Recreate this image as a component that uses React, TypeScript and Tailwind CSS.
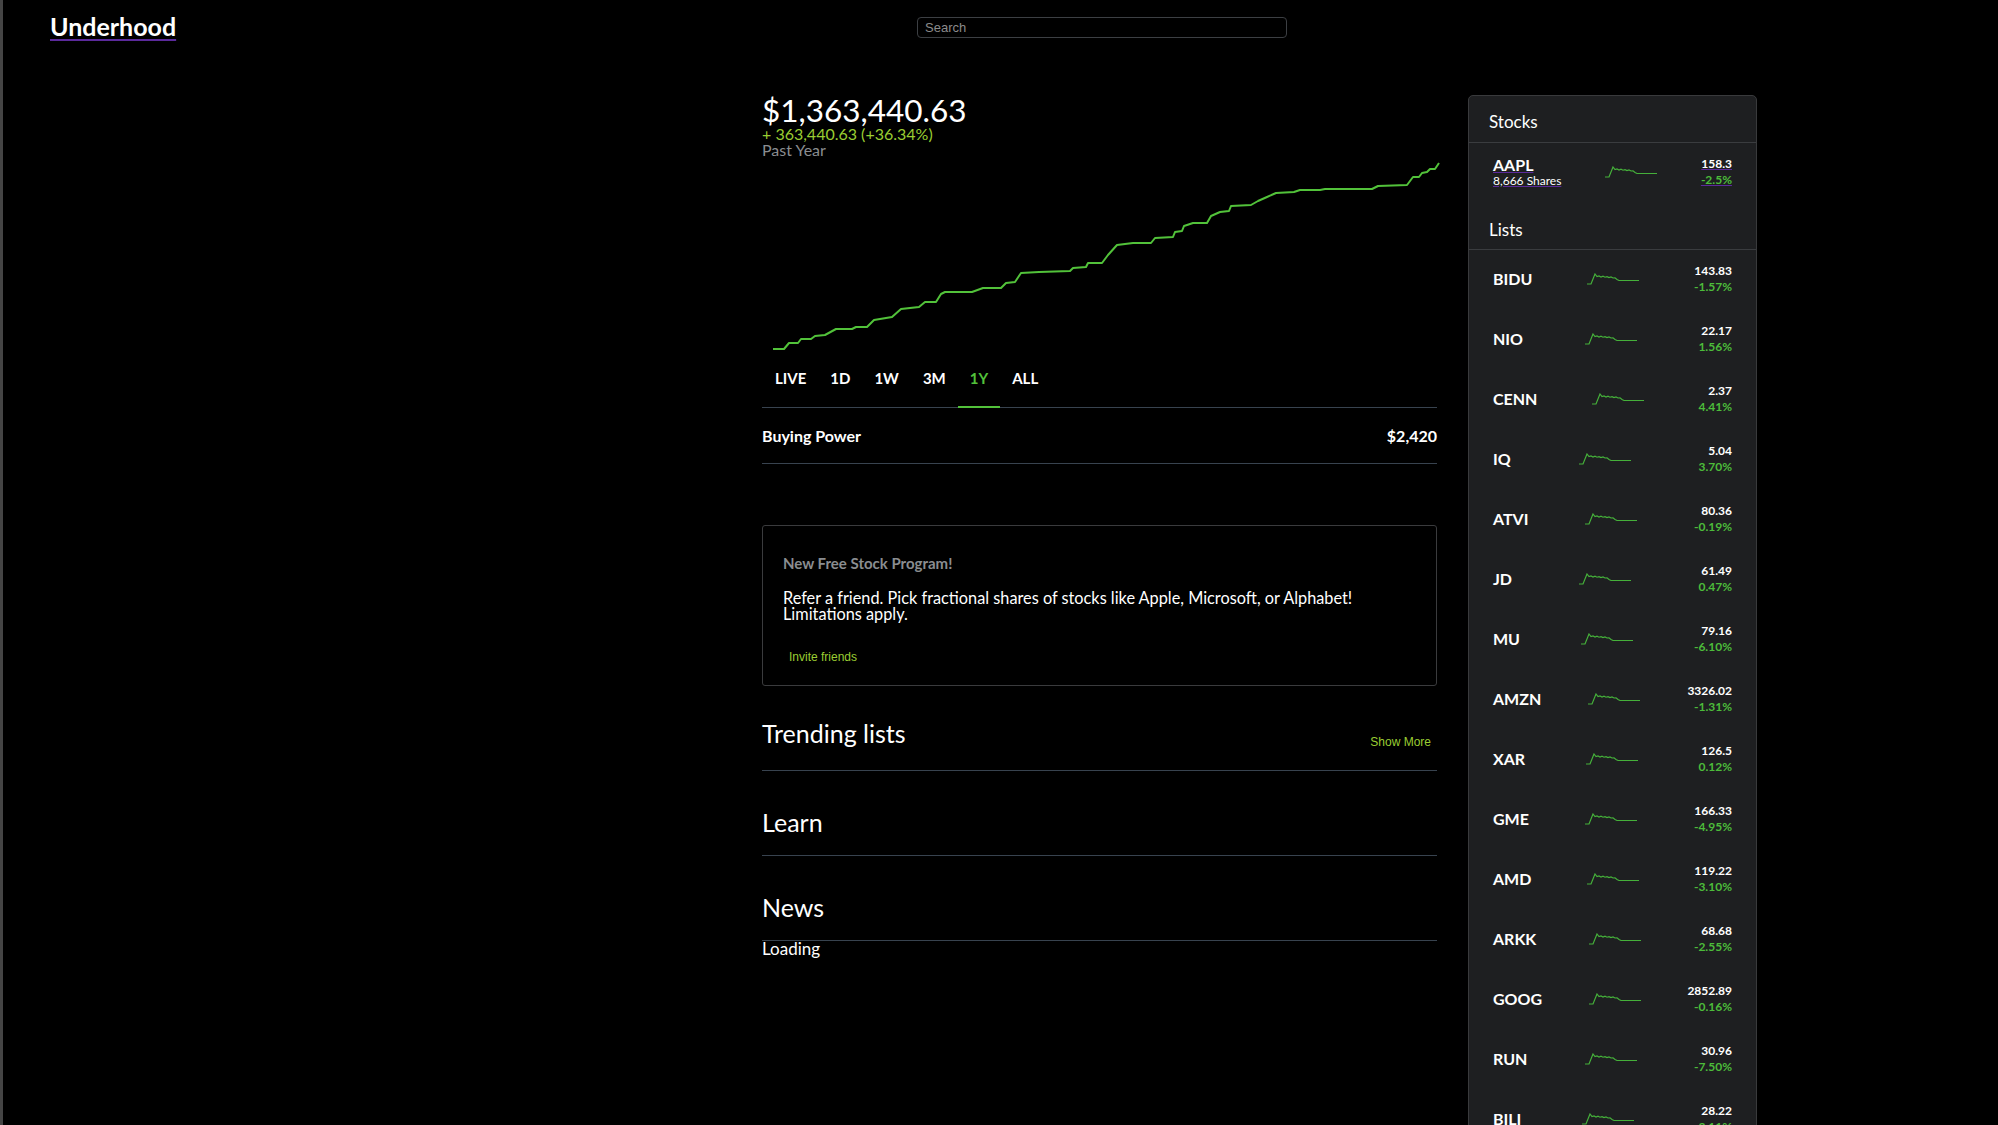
import React from 'react'

const chartPoints = [
  [773, 349], [784, 349], [789, 343], [798, 343], [801, 339], [811, 339], [815, 336], [825, 335],
  [836, 329], [852, 329], [856, 327], [867, 327], [874, 320], [892, 317], [901, 309], [919, 307],
  [925, 302], [936, 302], [941, 294], [945, 292], [972, 292], [983, 288], [1001, 288], [1006, 283],
  [1015, 282], [1021, 273], [1039, 272], [1070, 271], [1073, 268], [1086, 267], [1088, 263],
  [1102, 263], [1108, 255], [1117, 245], [1133, 243], [1151, 243], [1155, 238], [1173, 237],
  [1175, 232], [1182, 231], [1184, 226], [1193, 223], [1207, 223], [1211, 216], [1220, 212],
  [1229, 211], [1231, 206], [1251, 205], [1258, 201], [1267, 197], [1276, 193], [1294, 192],
  [1300, 190], [1320, 190], [1325, 189], [1372, 189], [1378, 186], [1407, 185], [1413, 177],
  [1419, 177], [1422, 173], [1427, 172], [1430, 169], [1435, 169], [1439, 163],
]

const sparkPoints =
  '0,11 4,11 8,1 10,3.5 12,3 14,4 16,3.2 18,4.2 20,3.6 22,4.6 24,4 26,5 28,4.8 30,6.5 32,7.5 34,7.5 52,7.5'

const lists = [
  { symbol: 'BIDU', price: '143.83', change: '-1.57%' },
  { symbol: 'NIO', price: '22.17', change: '1.56%' },
  { symbol: 'CENN', price: '2.37', change: '4.41%' },
  { symbol: 'IQ', price: '5.04', change: '3.70%' },
  { symbol: 'ATVI', price: '80.36', change: '-0.19%' },
  { symbol: 'JD', price: '61.49', change: '0.47%' },
  { symbol: 'MU', price: '79.16', change: '-6.10%' },
  { symbol: 'AMZN', price: '3326.02', change: '-1.31%' },
  { symbol: 'XAR', price: '126.5', change: '0.12%' },
  { symbol: 'GME', price: '166.33', change: '-4.95%' },
  { symbol: 'AMD', price: '119.22', change: '-3.10%' },
  { symbol: 'ARKK', price: '68.68', change: '-2.55%' },
  { symbol: 'GOOG', price: '2852.89', change: '-0.16%' },
  { symbol: 'RUN', price: '30.96', change: '-7.50%' },
  { symbol: 'BILI', price: '28.22', change: '-3.11%' },
]

const tabs = ['LIVE', '1D', '1W', '3M', '1Y', 'ALL']

function Sparkline() {
  return (
    <svg width="52" height="12" viewBox="0 0 52 12" className="shrink-0">
      <polyline points={sparkPoints} fill="none" stroke="#45b03a" strokeWidth="1.2" />
    </svg>
  )
}

function Sidebar() {
  return (
    <aside className="w-[289px] rounded-[5px] border border-[#393a3c] bg-[#1e1f21]">
      <div className="border-b border-[#3a3c3f] pl-[20px] pt-[16px] pb-[10px] text-[17px] leading-[20px]">Stocks</div>
      <div className="flex h-[61px] items-center justify-between px-[24px] pb-[4px]">
        <a href="#" className="flex flex-col underline decoration-[#5b2a9c] underline-offset-[1px]">
          <span className="text-[16px] font-bold leading-[17px]">AAPL</span>
          <span className="text-[12px] leading-[15px]">8,666 Shares</span>
        </a>
        <Sparkline />
        <div className="flex flex-col items-end text-[12px] font-bold leading-[16px]">
          <span className="underline decoration-[#5b2a9c] underline-offset-[1px]">158.3</span>
          <span className="text-[#4cbb3a] underline decoration-[#5b2a9c] underline-offset-[1px]">-2.5%</span>
        </div>
      </div>
      <div className="border-b border-[#3a3c3f] pl-[20px] pt-[16px] pb-[9px] text-[17px] leading-[20px]">Lists</div>
      {lists.map((item) => (
        <div key={item.symbol} className="flex h-[60px] items-center justify-between px-[24px] pb-[3px]">
          <span className="text-[16px] font-bold">{item.symbol}</span>
          <Sparkline />
          <div className="flex flex-col items-end text-[12px] font-bold leading-[16px]">
            <span>{item.price}</span>
            <span className="text-[#4cbb3a]">{item.change}</span>
          </div>
        </div>
      ))}
    </aside>
  )
}

export default function App() {
  return (
    <div className="h-screen overflow-hidden bg-black font-['Lato',sans-serif] text-white shadow-[inset_3px_0_0_#454545]">
      <header className="grid h-[55px] grid-cols-[917px_370px]">
        <a href="#" className="pl-[50px] pt-[11px] text-[25px] font-bold leading-[30px] underline decoration-[#5b2a9c] decoration-2 underline-offset-[3px]">
          Underhood
        </a>
        <input
          placeholder="Search"
          className="mt-[17px] h-[21px] rounded-[4px] border border-[#3c3f43] bg-black px-[7px] font-['Liberation_Sans',sans-serif] text-[13px] text-white outline-none placeholder:text-[#8b8b8b]"
        />
      </header>

      <div className="grid grid-cols-[675px_289px] gap-x-[31px] pl-[762px] pt-[40px]">
        <main className="flex flex-col">
          <div className="text-[31.5px] leading-[31px]">$1,363,440.63</div>
          <div className="text-[16px] leading-[16px] text-[#9acd32]">+ 363,440.63 (+36.34%)</div>
          <div className="text-[16px] leading-[16px] text-[#8a8d90]">Past Year</div>

          <svg width="675" height="200" viewBox="762 158 675 200" className="overflow-visible">
            <polyline
              points={chartPoints.map((p) => p.join(',')).join(' ')}
              fill="none"
              stroke="#52c23a"
              strokeWidth="2"
              strokeLinejoin="round"
            />
          </svg>

          <div className="flex border-b border-[#38434f] pl-px">
            {tabs.map((t) => (
              <button
                key={t}
                className={
                  t === '1Y'
                    ? '-mb-px border-b-2 border-[#52c23a] px-[12px] pt-[10px] pb-[18px] text-[15px] font-bold leading-[20px] text-[#52c23a]'
                    : '-mb-px border-b-2 border-transparent px-[12px] pt-[10px] pb-[18px] text-[15px] font-bold leading-[20px]'
                }
              >
                {t}
              </button>
            ))}
          </div>

          <div className="flex h-[56px] items-center justify-between border-b border-[#38434f] text-[16px] font-bold">
            <span>Buying Power</span>
            <span>$2,420</span>
          </div>

          <div className="mt-[61px] rounded-[3px] border border-[#3a3b3d] px-[20px] pt-[27px] pb-[21px]">
            <div className="text-[15px] font-bold leading-[20px] text-[#8a8d90]">New Free Stock Program!</div>
            <p className="mt-[17px] text-[16.3px] leading-[16px]">
              Refer a friend. Pick fractional shares of stocks like Apple, Microsoft, or Alphabet! Limitations apply.
            </p>
            <button className="ml-[6px] mt-[28px] block font-['Liberation_Sans',sans-serif] text-[12px] leading-[14px] text-[#9acd32]">
              Invite friends
            </button>
          </div>

          <div className="mt-[32px] flex items-start justify-between border-b border-[#38434f] pb-[21px]">
            <h2 className="text-[25px] leading-[30px]">Trending lists</h2>
            <button className="pt-[17px] pr-[6px] font-['Liberation_Sans',sans-serif] text-[12px] leading-[14px] text-[#9acd32]">
              Show More
            </button>
          </div>

          <h2 className="mt-[36px] border-b border-[#38434f] pb-[18px] text-[25px] leading-[30px]">Learn</h2>

          <h2 className="mt-[36px] border-b border-[#38434f] pb-[18px] text-[25px] leading-[30px]">News</h2>
          <div className="text-[17px] leading-[16px]">Loading</div>
        </main>

        <Sidebar />
      </div>
    </div>
  )
}
